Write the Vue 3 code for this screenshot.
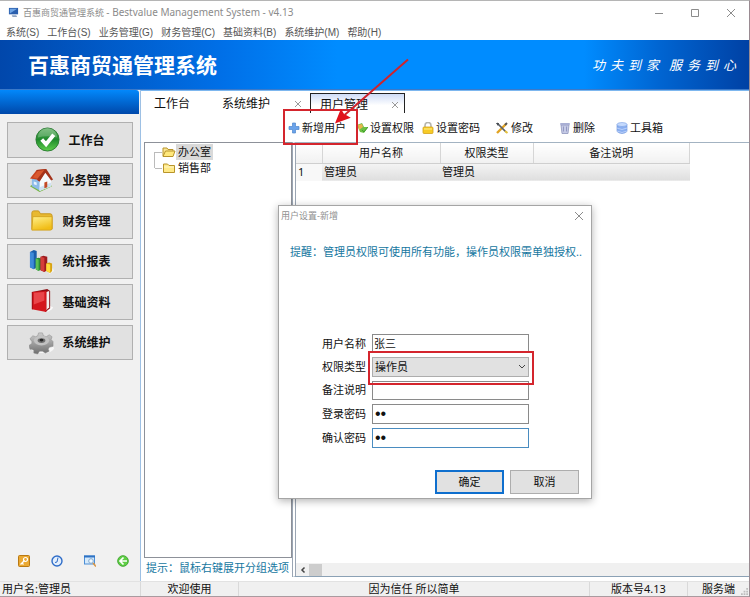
<script setup>
import { ref } from 'vue'

const menus = ['系统(S)', '工作台(S)', '业务管理(G)', '财务管理(C)', '基础资料(B)', '系统维护(M)', '帮助(H)']
const slogan = ['功', '夫', '到', '家', '', '服', '务', '到', '心']
const nav = [
  { id: 'check', label: '工作台' },
  { id: 'house', label: '业务管理' },
  { id: 'folder', label: '财务管理' },
  { id: 'chart', label: '统计报表' },
  { id: 'book', label: '基础资料' },
  { id: 'gear', label: '系统维护' },
]
const userName = ref('张三')
const role = ref('操作员')
const remark = ref('')
const pass = ref('12')
const confirmPass = ref('12')
</script>

<template>
  <div class="window">
    <header class="titlebar">
      <svg class="app-icon" viewBox="0 0 12 12"><rect x="1" y="1" width="10" height="7" fill="#2b5fae" /><path d="M2 2h8L2 7z" fill="#6fa5e4" /><path d="M4 9h5l1 2H5z" fill="#8fa3c0" /></svg>
      <h1 class="caption">百惠商贸通管理系统 <span class="latin">- Bestvalue Management System - v4.13</span></h1>
      <div class="win-controls">
        <button type="button" aria-label="最小化"><svg viewBox="0 0 10 10"><path d="M1 5.5h8" /></svg></button>
        <button type="button" aria-label="最大化"><svg viewBox="0 0 10 10"><path d="M1.5 1.5h7v7h-7z" /></svg></button>
        <button type="button" aria-label="关闭"><svg viewBox="0 0 10 10"><path d="M1 1l8 8M9 1l-8 8" /></svg></button>
      </div>
    </header>
    <nav class="menubar">
      <button v-for="m in menus" :key="m" type="button">{{ m }}</button>
    </nav>
    <div class="banner">
      <h2>百惠商贸通管理系统</h2>
      <p class="slogan"><span v-for="(c, i) in slogan" :key="i">{{ c }}</span></p>
    </div>

    <div class="body">
      <aside class="sidebar">
        <div class="side-head"></div>
        <div class="side-nav">
          <button v-for="n in nav" :key="n.id" type="button" class="side-btn">
            <svg v-if="n.id === 'check'" viewBox="0 0 26 26">
              <defs><linearGradient id="gc" x2="0" y2="1"><stop stop-color="#5fae62" /><stop offset=".5" stop-color="#1f8a2c" /><stop offset="1" stop-color="#5ed04c" /></linearGradient></defs>
              <circle cx="13" cy="13" r="12" fill="url(#gc)" stroke="#2d7d35" />
              <path d="M3 11a10 10 0 0 1 20 0q-10-3-20 0z" fill="#fff" opacity=".22" />
              <path d="M7 13l4.500 5L19.500 8" fill="none" stroke="#fff" stroke-width="4" />
            </svg>
            <svg v-else-if="n.id === 'house'" viewBox="0 0 26 26">
              <path d="M1 19l10 6 13-6-3-3-17 1z" fill="#79b646" />
              <path d="M3 11l7-3 2 6v10l-9-5z" fill="#8dbbe8" />
              <path d="M11 14l6-9 6 7v7l-12 5z" fill="#f6fafd" />
              <path d="M11 20l12-5v4l-12 5z" fill="#cfe1f2" />
              <path d="M1 11L8 2l10-1-7 13-3-2z" fill="#c8431f" />
              <path d="M8 2l10-1 7 11-2 1-6-8-6 9-2-1z" fill="#a4331b" />
              <path d="M9 3l7-1-7 9-5-1z" fill="#d9582f" />
              <path d="M16 15l3-1v6l-3 1z" fill="#c44a26" />
              <path d="M5 14l3 1v3l-3-1z" fill="#e8f4ff" />
            </svg>
            <svg v-else-if="n.id === 'folder'" viewBox="0 0 26 26">
              <defs><linearGradient id="gf" x2=".4" y2="1"><stop stop-color="#fff08a" /><stop offset="1" stop-color="#f1bd16" /></linearGradient></defs>
              <path d="M3 22V5q0-2 2-2h5l2 3h10q2 0 2 2v14z" fill="#e8b930" stroke="#c7951b" />
              <path d="M3 23l1-14h20v12q0 2-2 2z" fill="url(#gf)" stroke="#d5a521" />
            </svg>
            <svg v-else-if="n.id === 'chart'" viewBox="0 0 26 26">
              <path d="M20 22l5-2 1 3-5 3z" fill="#f5f5f5" />
              <path d="M1 3l4-2 3 1v17l-3 2-4-2z" fill="#1a5dab" /><path d="M1 3l4 1v17l-4-2z" fill="#3d8ad8" />
              <path d="M7 10l3-1 3 1v11l-3 2-3-2z" fill="#2a8d36" /><path d="M7 10l3 1v12l-3-2z" fill="#5cc054" />
              <path d="M12 8l3-1 4 1v14l-3 2-4-2z" fill="#9d1b1e" /><path d="M12 8l4 1v15l-4-2z" fill="#d53d3a" />
              <path d="M18 15l3-1 3 1v8l-2 2-4-2z" fill="#d8a313" /><path d="M18 15l4 1v9l-4-2z" fill="#ffdb3b" />
            </svg>
            <svg v-else-if="n.id === 'book'" viewBox="0 0 26 26">
              <path d="M20 17l5 2-1 2-5 3z" fill="#fafafa" />
              <path d="M3 3L19 0l3 2v18l-5 4z" fill="#8e1015" />
              <path d="M18 3l3-1v17l-3 3z" fill="#f5eeee" />
              <path d="M3 3l15-1v22L3 21z" fill="#d4161d" />
              <path d="M5 4l11-1v9L5 16z" fill="#f0575a" opacity=".75" />
              <path d="M3 3v18l1 0V3z" fill="#a00f15" />
            </svg>
            <svg v-else viewBox="0 0 26 26">
              <defs><linearGradient id="gg" x2="0" y2="1"><stop stop-color="#cdcdcd" /><stop offset="1" stop-color="#6e6e6e" /></linearGradient></defs>
              <ellipse cx="14" cy="19" rx="12" ry="5" fill="#f7f7f7" />
              <path d="M10 3h4l1 3 3 1 3-2 3 2-1 3 2 2v5l-4 1-1 2 1 2-4 2-3-2h-3l-2 3-4-1v-3l-2-1H1l-1-4 3-2v-2L1 9l3-3 3 1 2-1z" fill="url(#gg)" stroke="#858585" stroke-width=".5" />
              <ellipse cx="13" cy="11" rx="8" ry="5" fill="#c2c2c2" />
              <ellipse cx="13" cy="11" rx="4" ry="2.500" fill="#707070" />
              <ellipse cx="13" cy="10.500" rx="2" ry="1.500" fill="#262626" />
            </svg>
            <span>{{ n.label }}</span>
          </button>
        </div>
        <div class="side-tools">
          <button type="button" aria-label="密码"><svg viewBox="0 0 12 12"><rect x=".5" y=".5" width="11" height="11" rx="1" fill="#eba932" stroke="#b97913" /><path d="M2.500 9.500l4-4M4 8l1.500 1.500" stroke="#fff" stroke-width="1.300" /><circle cx="7.500" cy="4.500" r="2" fill="none" stroke="#fff" stroke-width="1.200" /></svg></button>
          <button type="button" aria-label="时间"><svg viewBox="0 0 12 12"><circle cx="6" cy="6" r="5" fill="#e4effc" stroke="#2f6dc8" stroke-width="1.400" /><path d="M7 2.500L6 7 4 7.500" fill="none" stroke="#2f6dc8" /></svg></button>
          <button type="button" aria-label="查找"><svg viewBox="0 0 12 12"><rect x=".5" y="1" width="10" height="8" fill="#d5eafc" stroke="#4d8fd6" /><path d="M0 1.500h11" stroke="#2e72c4" stroke-width="2" /><circle cx="7" cy="6" r="2.300" fill="#f3faff" stroke="#82a8cd" /><path d="M9 8l3 3.500" stroke="#d99645" stroke-width="1.600" /></svg></button>
          <button type="button" aria-label="返回"><svg viewBox="0 0 12 12"><circle cx="6" cy="6" r="5.300" fill="#5fcf45" stroke="#45a834" /><path d="M6.500 2.500L3 6l3.500 3.500M3.500 6H10" fill="none" stroke="#fff" stroke-width="1.700" /></svg></button>
        </div>
      </aside>

      <main class="content">
        <div class="tabs">
          <button type="button" class="tab first">工作台</button>
          <button type="button" class="tab second"><span>系统维护</span><svg class="x" viewBox="0 0 8 8"><path d="M1 1l6 6M7 1L1 7" /></svg></button>
          <button type="button" class="tab active"><span>用户管理</span><svg class="x" viewBox="0 0 8 8"><path d="M1 1l6 6M7 1L1 7" /></svg></button>
        </div>
        <div class="toolbar">
          <div class="marked">
            <button type="button" class="tool"><svg viewBox="0 0 12 12"><path d="M4.500 1h3v3.500H11v3H7.500V11h-3V7.500H1v-3h3.500z" fill="#6ba3ea" stroke="#4f86cd" stroke-width=".7" /></svg>新增用户</button>
            <span class="mark-box"></span>
            <svg class="arrow" viewBox="0 0 76 68"><path d="M75 1L11 57" stroke="#d0232b" stroke-width="2" fill="none" /><path d="M1 66L7 51l3 5 7 4z" fill="#e0121c" /></svg>
          </div>
          <button type="button" class="tool"><svg viewBox="0 0 12 12"><path d="M1 3l5-2 2 4 4 0-4 6-4-1z" fill="#6cc043" /><path d="M2 3l4-1 1 3-4 3z" fill="#e9b44e" /><path d="M6 8l2 2 4-5" stroke="#3f9f30" fill="none" /></svg>设置权限</button>
          <button type="button" class="tool"><svg viewBox="0 0 12 12"><path d="M3 6V3.500a3 3 0 0 1 6 0V6" fill="none" stroke="#b5b5ad" stroke-width="1.600" /><rect x="1" y="5" width="10" height="6.500" rx="1" fill="#f7cb26" stroke="#d4a21a" stroke-width=".8" /><path d="M2 7h8" stroke="#fff08c" /></svg>设置密码</button>
          <button type="button" class="tool"><svg class="wide" viewBox="0 0 14 12"><path d="M2 11L11 2" stroke="#e2a322" stroke-width="2.400" /><path d="M10 3l2-2" stroke="#555" stroke-width="2" /><path d="M2 1l9 9" stroke="#5b6067" stroke-width="1.700" /><path d="M1 1l3 0-1 3z" fill="#454a50" /><path d="M10 9l2.500 2" stroke="#e5c13c" stroke-width="2" /></svg>修改</button>
          <button type="button" class="tool"><svg viewBox="0 0 12 12"><path d="M2 3h8l-1 8.500H3z" fill="#c5cae6" stroke="#8f95bd" stroke-width=".8" /><rect x="1" y="1" width="10" height="2" rx="1" fill="#a9afd4" /><path d="M4.500 4.500v5M7.500 4.500v5" stroke="#858cb9" stroke-width=".8" /></svg>删除</button>
          <button type="button" class="tool"><svg viewBox="0 0 12 12"><path d="M1 2.500v7q5 4 10 0v-7z" fill="#88aef0" stroke="#678fd8" stroke-width=".6" /><ellipse cx="6" cy="2.500" rx="5" ry="2" fill="#c5dafd" stroke="#7ba0e2" stroke-width=".6" /><path d="M1 6q5 3 10 0M1 9q5 3 10 0" stroke="#b9cffa" fill="none" /></svg>工具箱</button>
        </div>

        <div class="panes">
          <section class="tree-pane">
            <ul class="tree">
              <li><i class="branch"></i><svg viewBox="0 0 14 12"><path d="M1 10V2h4l1 1.500h5V5" fill="#fbe694" stroke="#b8942a" /><path d="M1 10.500L3.500 5H13l-2 5.500z" fill="#ffe87c" stroke="#b8942a" /></svg><span class="picked">办公室</span></li>
              <li><i class="branch last"></i><svg viewBox="0 0 14 12"><path d="M1.500 10.500V2h4L7 3.500h5.500v7z" fill="#ffe987" stroke="#b8942a" /><path d="M2 5h10" stroke="#fff7c7" /></svg><span>销售部</span></li>
            </ul>
            <p class="hint">提示：鼠标右键展开分组选项</p>
          </section>
          <section class="grid-pane">
            <table>
              <colgroup><col class="c0"><col class="c1"><col class="c2"><col class="c3"></colgroup>
              <thead><tr><th></th><th>用户名称</th><th>权限类型</th><th>备注说明</th></tr></thead>
              <tbody><tr><td>1</td><td>管理员</td><td>管理员</td><td></td></tr></tbody>
            </table>
            <div class="scrollbar"><svg viewBox="0 0 8 8"><path d="M5.500 1.500L3 4l2.500 2.500" /></svg><i></i></div>
          </section>
        </div>
      </main>
    </div>

    <footer class="status">
      <span>用户名:管理员</span><span>欢迎使用</span><span>因为信任 所以简单</span><span>版本号4.13</span><span>服务端</span>
      <svg class="grip" viewBox="0 0 8 8"><path d="M6 0h2v2H6zM3 3h2v2H3zM6 3h2v2H6zM0 6h2v2H0zM3 6h2v2H3zM6 6h2v2H6z" fill="#bdbdbd" /></svg>
    </footer>

    <form class="dialog" role="dialog" aria-labelledby="dlg-title" @submit.prevent>
      <div class="dlg-head">
        <h3 id="dlg-title">用户设置-新增</h3>
        <button type="button" aria-label="关闭"><svg viewBox="0 0 10 10"><path d="M1 1l8 8M9 1l-8 8" /></svg></button>
      </div>
      <p class="notice">提醒：管理员权限可使用所有功能，操作员权限需单独授权..</p>
      <div class="fields">
        <label for="u-name">用户名称</label><input id="u-name" v-model="userName" type="text">
        <label for="u-role">权限类型</label>
        <div class="select-wrap">
          <select id="u-role" v-model="role"><option>操作员</option><option>管理员</option></select>
          <svg viewBox="0 0 8 6"><path d="M1 1l3 3 3-3" /></svg>
          <span class="role-mark"></span>
        </div>
        <label for="u-remark">备注说明</label><input id="u-remark" v-model="remark" type="text">
        <label for="u-pass">登录密码</label><input id="u-pass" v-model="pass" type="password">
        <label for="u-confirm">确认密码</label><input id="u-confirm" v-model="confirmPass" class="current" type="password">
      </div>
      <div class="actions">
        <button type="submit" class="primary">确定</button>
        <button type="button">取消</button>
      </div>
    </form>
  </div>
</template>

<style>
body { background: #fff; }
</style>

<style scoped>
* { box-sizing: border-box; }
h1, h2, h3, p, ul { margin: 0; padding: 0; font-weight: normal; }
button, input, select { font: inherit; color: inherit; margin: 0; padding: 0; border: 0; background: none; border-radius: 0; outline: 0; }
svg { display: block; flex: none; }
.window {
  position: relative; display: flex; flex-direction: column; min-height: 100vh;
  font: 11px/16px "Noto Sans", "Noto Sans CJK SC", sans-serif; color: #111;
  background: #fff; border-right: 1px solid #9a8b92; border-top: 1px solid #b5b5b5;
  white-space: nowrap;
}
.titlebar { display: flex; align-items: center; height: 23px; padding-left: 8px; }
.app-icon { width: 11px; height: 11px; }
.caption { flex: 1; margin-left: 4px; font-size: 9px; color: #8b8b8b; }
.latin { font-size: 10px; }
.win-controls { display: flex; gap: 26px; padding-right: 13px; }
.win-controls svg, .dlg-head svg { width: 10px; height: 10px; fill: none; stroke: #8c8c8c; }
.menubar { display: flex; gap: 8px; height: 16px; padding-left: 6px; font: 10px/15px "Liberation Sans", "Noto Sans CJK SC", sans-serif; color: #555; }
.banner {
  display: flex; align-items: center; justify-content: space-between; height: 50px; padding: 0 13px 0 28px;
  background: linear-gradient(90deg, #0147ab 0, #0070e8 30%, #008cff 45%, #008cff 78%, #0065d2 88%, #0041a4 100%);
  border-bottom: 1px solid #3b79c9; color: #fff;
}
.banner h2 { font-size: 21px; line-height: 30px; font-weight: 700; }
.slogan { display: flex; gap: 5px; font-size: 13px; line-height: 20px; font-style: italic; }

.body { display: flex; flex: 1; }
.sidebar { display: flex; flex-direction: column; width: 141px; background: #f1f1f1; border-right: 1px solid #9dc0e4; }
.side-head { height: 24px; margin-right: 1px; border-radius: 0 3px 0 0; background: linear-gradient(#0288fb, #0048aa); }
.side-nav { display: grid; grid-auto-rows: 1fr; gap: 5px; height: 238px; margin: 8px 7px 0; }
.side-btn { display: flex; align-items: center; justify-content: center; gap: 8px; border: 1px solid #b0b0b0; background: #e1e1e1; font-size: 12px; font-weight: 700; }
.side-btn svg { width: 25px; height: 25px; }
.side-btn span { padding-top: 2px; }
.side-tools { display: flex; gap: 21px; margin-top: auto; padding: 0 0 14px 18px; }
.side-tools svg { width: 12px; height: 12px; }

.content { display: flex; flex-direction: column; flex: 1; min-width: 0; border-top: 1px solid #7db7ef; }
.tabs { display: flex; height: 22px; padding-top: 2px; font-size: 12px; }
.tab { display: flex; align-items: center; justify-content: space-between; padding-top: 2px; }
.tab.first { width: 81px; padding-left: 13px; justify-content: flex-start; }
.tab.second { width: 88px; padding-right: 8px; }
.tab.active { width: 95px; padding: 2px 5px 0 9px; border: 1px solid #222; border-bottom: 0; background: linear-gradient(#cfdcf6, #fff 60%); }
.x { width: 8px; height: 8px; fill: none; stroke: #999; }
.toolbar { display: grid; grid-template-columns: 68px 66px 73px 64px 57px auto; justify-content: start; align-items: center; height: 29px; padding: 1px 0 0 147px; }
.tool { display: flex; align-items: center; gap: 2px; }
.tool svg { width: 12px; height: 12px; }
.tool svg.wide { width: 14px; }
.marked { position: relative; z-index: 2; }
.mark-box { position: absolute; inset: -11px -2px -9px -5px; border: 2px solid #d4252d; pointer-events: none; }
.arrow { position: absolute; left: 46px; bottom: 10px; width: 75px; height: 68px; pointer-events: none; }

.panes { display: flex; flex: 1; }
.tree-pane { display: flex; flex-direction: column; width: 151px; padding: 0 0 0 3px; }
.tree { flex: 1; list-style: none; border: 1px solid #8d9199; padding: 1px 0 0 9px; }
.tree li { display: flex; align-items: center; height: 16px; }
.tree svg { width: 14px; height: 12px; }
.tree span { padding: 0 2px; }
.tree .picked { background: #d9d9d9; }
.branch { position: relative; width: 8px; height: 16px; border-left: 1px solid #bbb; }
.branch::after { content: ""; position: absolute; left: 0; top: 8px; width: 7px; border-top: 1px solid #bbb; }
.branch:not(.last) { height: 8px; align-self: flex-end; }
.branch:not(.last)::after { top: 0; }
.branch.last { height: 8px; align-self: flex-start; }
.hint { padding: 1px 0 5px 2px; line-height: 17px; color: #16779f; }
.grid-pane { display: flex; flex-direction: column; justify-content: space-between; flex: 1; min-width: 0; margin-bottom: 4px; border-left: 4px double #9aa5b3; border-top: 1px solid #a3b3c2; border-bottom: 1px solid #8ba1b5; }
table { width: 394px; table-layout: fixed; border-collapse: collapse; }
.c0 { width: 26px; } .c1 { width: 118px; } .c2 { width: 93px; }
th { height: 20px; padding: 0; font-weight: normal; background: linear-gradient(#fff, #f1f1f1); border-right: 1px solid #d6d6d6; border-bottom: 1px solid #cfcfcf; }
td { height: 18px; padding: 0 2px; background: linear-gradient(#f4f4f4, #dedede); }
td:first-child { background: #f8f8f8; }
.scrollbar { display: flex; align-items: center; gap: 2px; height: 13px; padding-left: 3px; background: #f0f0f0; }
.scrollbar svg { width: 8px; height: 8px; fill: none; stroke: #444; stroke-width: 1.5; }
.scrollbar i { width: 13px; height: 12px; background: #cdcdcd; }

.status { position: relative; display: grid; grid-template-columns: 141px 98px 1fr 98px 61px; height: 16px; background: #f0f0f0; border-top: 1px solid #e2e2e2; border-bottom: 1px solid #a99a9f; line-height: 14px; text-align: center; }
.status span { border-right: 1px solid #d9d9d9; }
.status span:first-of-type { text-align: left; padding-left: 2px; }
.status span:last-of-type { border: 0; }
.grip { position: absolute; right: 1px; bottom: 1px; width: 7px; height: 7px; }

.dialog { position: absolute; left: 278px; top: 204px; z-index: 3; width: 314px; background: #fff; border: 1px solid #a5a5a5; box-shadow: 0 2px 8px rgba(0, 0, 0, .3); }
.dlg-head { display: flex; align-items: center; justify-content: space-between; height: 19px; padding: 0 7px 0 2px; }
.dlg-head h3 { font-size: 9px; color: #8f8f8f; }
.notice { padding: 19px 0 0 11px; color: #16779f; }
.fields { display: grid; grid-template-columns: 44px 157px; grid-auto-rows: 1fr; gap: 4px 6px; align-items: stretch; height: 114px; margin: 74px 0 0 43px; }
.fields label { align-self: center; }
.fields input { min-width: 0; border: 1px solid #8a8a8a; padding: 0 1px; background: #fff; line-height: 16px; }
.fields input[type="password"] { padding: 0 2px; font-family: "Liberation Sans", sans-serif; font-size: 16px; }
.fields input.current { border-color: #4a8cc0; }
.select-wrap { position: relative; display: flex; }
.select-wrap select { width: 100%; appearance: none; padding: 0 2px; background: #e1e1e1; border: 1px solid #adadad; }
.select-wrap svg { position: absolute; right: 3px; top: 7px; width: 8px; height: 6px; fill: none; stroke: #444; pointer-events: none; }
.role-mark { position: absolute; inset: -6px -5px -8px -4px; border: 2px solid #d4252d; pointer-events: none; }
.actions { display: flex; justify-content: flex-end; gap: 6px; padding: 22px 12px 4px; }
.actions button { width: 69px; height: 24px; background: #e1e1e1; border: 1px solid #adadad; }
.actions .primary { border: 2px solid #0f6fce; }
</style>
